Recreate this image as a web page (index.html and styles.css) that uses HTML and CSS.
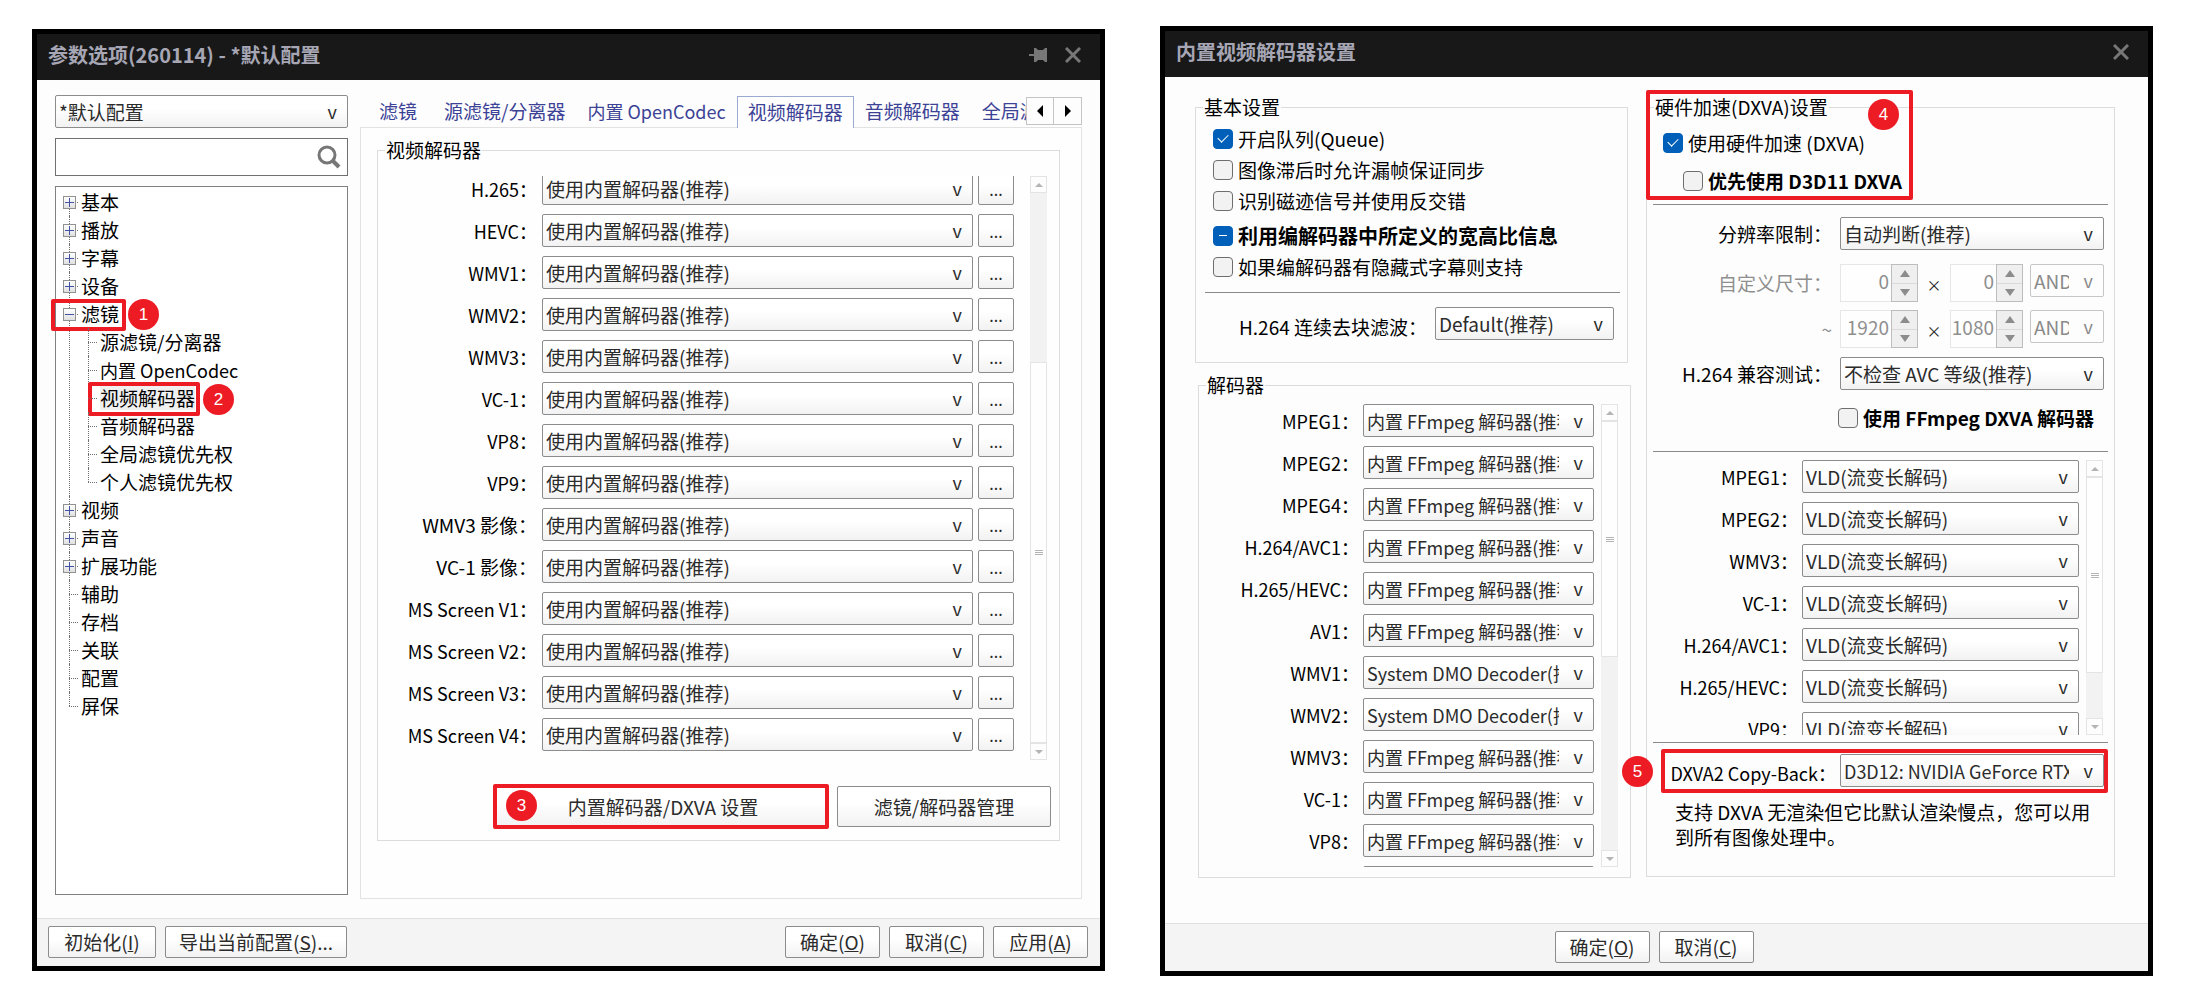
FILE: index.html
```html
<!DOCTYPE html>
<html lang="zh-CN">

<head>
  <meta charset="UTF-8">
  <meta name="viewport" content="width=device-width, initial-scale=1.0">
  <title>参数选项</title>
  <link rel="stylesheet" href="styles.css">
</head>

<body>
  <section class="window window-options">
    <header class="titlebar">
      <h1>参数选项(260114) - *默认配置</h1>
      <button class="icon-btn" aria-label="置顶">
        <svg width="18" height="16" viewBox="0 0 18 16"><path d="M0 7h5V1h2l2 2h5l2-2h2v14h-2l-2-2H9l-2 2H5V9H0z" fill="#777"/></svg>
      </button>
      <button class="icon-btn" aria-label="关闭">
        <svg width="16" height="16" viewBox="0 0 16 16"><path d="M1 1l14 14M15 1L1 15" stroke="#777" stroke-width="3" fill="none"/></svg>
      </button>
    </header>

    <main class="options-body">
      <aside class="sidebar">
        <div class="combo"><select aria-label="配置"><option>*默认配置</option></select></div>
        <div class="search">
          <input type="text" aria-label="搜索">
          <svg width="24" height="24" viewBox="0 0 24 24"><circle cx="10" cy="10" r="8" fill="none" stroke="#777" stroke-width="3"/><path d="M15 15l7 7" stroke="#777" stroke-width="4"/></svg>
        </div>
        <nav class="tree">
          <ul>
            <li><button class="toggle" aria-label="展开"></button><a href="#">基本</a></li>
            <li><button class="toggle" aria-label="展开"></button><a href="#">播放</a></li>
            <li><button class="toggle" aria-label="展开"></button><a href="#">字幕</a></li>
            <li><button class="toggle" aria-label="展开"></button><a href="#">设备</a></li>
            <li>
              <button class="toggle open" aria-label="折叠"></button><a href="#">滤镜</a>
              <span class="mark mark-filter"></span><span class="badge badge-filter">1</span>
              <ul>
                <li><a href="#">源滤镜/分离器</a></li>
                <li><a href="#" class="latin">内置 OpenCodec</a></li>
                <li><a href="#" class="current">视频解码器</a><span class="mark mark-video"></span><span class="badge badge-video">2</span></li>
                <li><a href="#">音频解码器</a></li>
                <li><a href="#">全局滤镜优先权</a></li>
                <li><a href="#">个人滤镜优先权</a></li>
              </ul>
            </li>
            <li><button class="toggle" aria-label="展开"></button><a href="#">视频</a></li>
            <li><button class="toggle" aria-label="展开"></button><a href="#">声音</a></li>
            <li><button class="toggle" aria-label="展开"></button><a href="#">扩展功能</a></li>
            <li><a href="#">辅助</a></li>
            <li><a href="#">存档</a></li>
            <li><a href="#">关联</a></li>
            <li><a href="#">配置</a></li>
            <li><a href="#">屏保</a></li>
          </ul>
        </nav>
      </aside>

      <div class="tab-area">
        <div class="tabs">
          <div class="tab-strip">
            <a href="#">滤镜</a>
            <a href="#">源滤镜/分离器</a>
            <a href="#" class="latin">内置 OpenCodec</a>
            <a href="#" class="active">视频解码器</a>
            <a href="#">音频解码器</a>
            <a href="#">全局滤镜优先权</a>
          </div>
          <div class="tab-arrows">
            <button aria-label="向左"><svg width="8" height="12" viewBox="0 0 8 12"><path d="M7 0v12L1 6z"/></svg></button>
            <button aria-label="向右"><svg width="8" height="12" viewBox="0 0 8 12"><path d="M1 0v12l6-6z"/></svg></button>
          </div>
        </div>

        <div class="tab-panel">
          <fieldset class="group codec-group">
            <legend>视频解码器</legend>
            <div class="scroller">
              <div class="rows codec-rows">
                <div class="row"><label for="c1">H.265：</label><div class="combo"><select id="c1"><option>使用内置解码器(推荐)</option></select></div><button class="btn more">...</button></div>
                <div class="row"><label for="c2">HEVC：</label><div class="combo"><select id="c2"><option>使用内置解码器(推荐)</option></select></div><button class="btn more">...</button></div>
                <div class="row"><label for="c3">WMV1：</label><div class="combo"><select id="c3"><option>使用内置解码器(推荐)</option></select></div><button class="btn more">...</button></div>
                <div class="row"><label for="c4">WMV2：</label><div class="combo"><select id="c4"><option>使用内置解码器(推荐)</option></select></div><button class="btn more">...</button></div>
                <div class="row"><label for="c5">WMV3：</label><div class="combo"><select id="c5"><option>使用内置解码器(推荐)</option></select></div><button class="btn more">...</button></div>
                <div class="row"><label for="c6">VC-1：</label><div class="combo"><select id="c6"><option>使用内置解码器(推荐)</option></select></div><button class="btn more">...</button></div>
                <div class="row"><label for="c7">VP8：</label><div class="combo"><select id="c7"><option>使用内置解码器(推荐)</option></select></div><button class="btn more">...</button></div>
                <div class="row"><label for="c8">VP9：</label><div class="combo"><select id="c8"><option>使用内置解码器(推荐)</option></select></div><button class="btn more">...</button></div>
                <div class="row"><label for="c9" class="mixed">WMV3 影像：</label><div class="combo"><select id="c9"><option>使用内置解码器(推荐)</option></select></div><button class="btn more">...</button></div>
                <div class="row"><label for="c10" class="mixed">VC-1 影像：</label><div class="combo"><select id="c10"><option>使用内置解码器(推荐)</option></select></div><button class="btn more">...</button></div>
                <div class="row"><label for="c11">MS Screen V1：</label><div class="combo"><select id="c11"><option>使用内置解码器(推荐)</option></select></div><button class="btn more">...</button></div>
                <div class="row"><label for="c12">MS Screen V2：</label><div class="combo"><select id="c12"><option>使用内置解码器(推荐)</option></select></div><button class="btn more">...</button></div>
                <div class="row"><label for="c13">MS Screen V3：</label><div class="combo"><select id="c13"><option>使用内置解码器(推荐)</option></select></div><button class="btn more">...</button></div>
                <div class="row"><label for="c14">MS Screen V4：</label><div class="combo"><select id="c14"><option>使用内置解码器(推荐)</option></select></div><button class="btn more">...</button></div>
              </div>
              <div class="scrollbar at-end"><i class="up"></i><b></b><i class="down"></i></div>
            </div>
            <div class="codec-actions">
              <div class="marked">
                <button class="btn btn-dxva">内置解码器/DXVA 设置</button>
                <span class="mark mark-dxva"></span><span class="badge badge-dxva">3</span>
              </div>
              <button class="btn btn-manage">滤镜/解码器管理</button>
            </div>
          </fieldset>
        </div>
      </div>
    </main>

    <footer class="buttons">
      <button class="btn btn-init">初始化(<u>I</u>)</button>
      <button class="btn btn-export">导出当前配置(<u>S</u>)...</button>
      <span class="spacer"></span>
      <button class="btn">确定(<u>O</u>)</button>
      <button class="btn">取消(<u>C</u>)</button>
      <button class="btn">应用(<u>A</u>)</button>
    </footer>
  </section>

  <section class="window window-codec">
    <header class="titlebar">
      <h1>内置视频解码器设置</h1>
      <button class="icon-btn" aria-label="关闭">
        <svg width="16" height="16" viewBox="0 0 16 16"><path d="M1 1l14 14M15 1L1 15" stroke="#777" stroke-width="3" fill="none"/></svg>
      </button>
    </header>

    <main class="codec-body">
      <div class="column">
        <fieldset class="group basic-group">
          <legend>基本设置</legend>
          <label class="check"><input type="checkbox" checked>开启队列(Queue)</label>
          <label class="check"><input type="checkbox">图像滞后时允许漏帧保证同步</label>
          <label class="check"><input type="checkbox">识别磁迹信号并使用反交错</label>
          <label class="check strong"><input type="checkbox" class="partial">利用编解码器中所定义的宽高比信息</label>
          <label class="check"><input type="checkbox">如果编解码器有隐藏式字幕则支持</label>
          <hr>
          <div class="row deblock"><label for="deblock">H.264 连续去块滤波：</label><div class="combo"><select id="deblock"><option>Default(推荐)</option></select></div></div>
        </fieldset>

        <fieldset class="group decoder-group">
          <legend>解码器</legend>
          <div class="scroller">
            <div class="rows">
              <div class="row"><label for="d1">MPEG1：</label><div class="combo"><select id="d1"><option>内置 FFmpeg 解码器(推荐)</option></select></div></div>
              <div class="row"><label for="d2">MPEG2：</label><div class="combo"><select id="d2"><option>内置 FFmpeg 解码器(推荐)</option></select></div></div>
              <div class="row"><label for="d3">MPEG4：</label><div class="combo"><select id="d3"><option>内置 FFmpeg 解码器(推荐)</option></select></div></div>
              <div class="row"><label for="d4">H.264/AVC1：</label><div class="combo"><select id="d4"><option>内置 FFmpeg 解码器(推荐)</option></select></div></div>
              <div class="row"><label for="d5">H.265/HEVC：</label><div class="combo"><select id="d5"><option>内置 FFmpeg 解码器(推荐)</option></select></div></div>
              <div class="row"><label for="d6">AV1：</label><div class="combo"><select id="d6"><option>内置 FFmpeg 解码器(推荐)</option></select></div></div>
              <div class="row"><label for="d7">WMV1：</label><div class="combo"><select id="d7"><option>System DMO Decoder(推荐)</option></select></div></div>
              <div class="row"><label for="d8">WMV2：</label><div class="combo"><select id="d8"><option>System DMO Decoder(推荐)</option></select></div></div>
              <div class="row"><label for="d9">WMV3：</label><div class="combo"><select id="d9"><option>内置 FFmpeg 解码器(推荐)</option></select></div></div>
              <div class="row"><label for="d10">VC-1：</label><div class="combo"><select id="d10"><option>内置 FFmpeg 解码器(推荐)</option></select></div></div>
              <div class="row"><label for="d11">VP8：</label><div class="combo"><select id="d11"><option>内置 FFmpeg 解码器(推荐)</option></select></div></div>
              <div class="row"><label for="d12">VP9：</label><div class="combo"><select id="d12"><option>内置 FFmpeg 解码器(推荐)</option></select></div></div>
            </div>
            <div class="scrollbar"><i class="up"></i><b></b><i class="down"></i></div>
          </div>
        </fieldset>
      </div>

      <div class="column">
        <fieldset class="group dxva-group">
          <legend>硬件加速(DXVA)设置</legend>
          <span class="mark mark-accel"></span><span class="badge badge-accel">4</span>
          <label class="check"><input type="checkbox" checked>使用硬件加速 (DXVA)</label>
          <label class="check strong check-d3d11"><input type="checkbox">优先使用 D3D11 DXVA</label>
          <hr>
          <div class="row limit"><label for="limit">分辨率限制：</label><div class="combo"><select id="limit"><option>自动判断(推荐)</option></select></div></div>
          <div class="row size">
            <label for="minw">自定义尺寸：</label>
            <div class="spinner"><input id="minw" type="text" value="0" disabled><span><i></i><i></i></span></div>
            <em>×</em>
            <div class="spinner"><input type="text" aria-label="最小高度" value="0" disabled><span><i></i><i></i></span></div>
            <div class="combo"><select aria-label="条件" disabled><option>AND</option></select></div>
          </div>
          <div class="row size">
            <label for="maxw" class="tilde">~</label>
            <div class="spinner"><input id="maxw" type="text" value="1920" disabled><span><i></i><i></i></span></div>
            <em>×</em>
            <div class="spinner"><input type="text" aria-label="最大高度" value="1080" disabled><span><i></i><i></i></span></div>
            <div class="combo"><select aria-label="条件" disabled><option>AND</option></select></div>
          </div>
          <div class="row limit compat"><label for="compat">H.264 兼容测试：</label><div class="combo"><select id="compat"><option>不检查 AVC 等级(推荐)</option></select></div></div>
          <label class="check strong check-ffmpeg"><input type="checkbox">使用 FFmpeg DXVA 解码器</label>
          <hr>
          <div class="scroller">
            <div class="rows">
              <div class="row"><label for="x1">MPEG1：</label><div class="combo"><select id="x1"><option>VLD(流变长解码)</option></select></div></div>
              <div class="row"><label for="x2">MPEG2：</label><div class="combo"><select id="x2"><option>VLD(流变长解码)</option></select></div></div>
              <div class="row"><label for="x3">WMV3：</label><div class="combo"><select id="x3"><option>VLD(流变长解码)</option></select></div></div>
              <div class="row"><label for="x4">VC-1：</label><div class="combo"><select id="x4"><option>VLD(流变长解码)</option></select></div></div>
              <div class="row"><label for="x5">H.264/AVC1：</label><div class="combo"><select id="x5"><option>VLD(流变长解码)</option></select></div></div>
              <div class="row"><label for="x6">H.265/HEVC：</label><div class="combo"><select id="x6"><option>VLD(流变长解码)</option></select></div></div>
              <div class="row"><label for="x7">VP9：</label><div class="combo"><select id="x7"><option>VLD(流变长解码)</option></select></div></div>
            </div>
            <div class="scrollbar"><i class="up"></i><b></b><i class="down"></i></div>
          </div>
          <hr>
          <div class="row limit copyback">
            <label for="copyback">DXVA2 Copy-Back：</label>
            <div class="combo"><select id="copyback"><option>D3D12: NVIDIA GeForce RTX 4060</option></select></div>
            <span class="mark mark-copy"></span><span class="badge badge-copy">5</span>
          </div>
          <p>支持 DXVA 无渲染但它比默认渲染慢点，您可以用到所有图像处理中。</p>
        </fieldset>
      </div>
    </main>

    <footer class="buttons centered">
      <button class="btn">确定(<u>O</u>)</button>
      <button class="btn">取消(<u>C</u>)</button>
    </footer>
  </section>

  <script>
    document.querySelector('.partial').indeterminate = true;
  </script>
</body>

</html>
```
FILE: styles.css
```css
* {
  box-sizing: border-box;
}

body {
  margin: 0;
  padding: 26px 33px 30px 32px;
  display: grid;
  grid-template-columns: 1073fr 993fr;
  gap: 55px;
  align-items: start;
  background: #fff;
  color: #000;
  font-family: "Noto Sans CJK SC", "Open Sans", sans-serif;
  font-size: 19px;
  line-height: 24px;
}

button,
input,
select {
  font: inherit;
  color: inherit;
  margin: 0;
}

a {
  color: inherit;
  text-decoration: none;
}

.latin {
  font-size: 18px;
}

.window {
  border: 5px solid #000;
  background: #fdfdfd;
  min-width: 0;
}

.window-options {
  margin-top: 3px;
}

.titlebar {
  display: flex;
  align-items: center;
  gap: 18px;
  height: 46px;
  padding: 0 19px 4px 11px;
  background: #181818;
}

.titlebar h1 {
  flex: 1;
  margin: 0;
  font-size: 20px;
  font-weight: 700;
  color: #a6a6b4;
}

.icon-btn {
  display: flex;
  padding: 0;
  border: 0;
  background: none;
}

/* buttons and drop-downs */

.btn,
.combo {
  border: 1px solid #8c8c8c;
  border-radius: 2px;
  background: linear-gradient(#fff 40%, #f2f2f2);
  color: #2b2b2b;
}

.btn {
  height: 32px;
  padding: 0;
  line-height: 24px;
}

.combo {
  position: relative;
  height: 33px;
  min-width: 0;
}

.combo::after {
  content: "v";
  position: absolute;
  right: 10px;
  top: 3px;
  font-size: 18px;
  pointer-events: none;
}

.combo select {
  appearance: none;
  display: block;
  width: 100%;
  height: 31px;
  padding: 0;
  border: 0;
  border-left: 3px solid transparent;
  border-right: 34px solid transparent;
  background: none;
  opacity: 1;
}

.group {
  position: relative;
  min-width: 0;
  margin: 0;
  border: 1px solid #dcdcdc;
}

.group legend {
  margin-left: 7px;
  padding: 0 1px;
}

.row {
  display: grid;
  align-items: center;
}

.row label {
  padding-right: 4px;
  text-align: right;
  white-space: nowrap;
}

.scroller {
  display: flex;
  overflow: hidden;
}

.rows {
  flex: 1;
  display: flex;
  flex-direction: column;
  gap: 9px;
  min-width: 0;
}

.rows label {
  font-size: 18px;
}

.rows .mixed {
  font-size: 19px;
}

.scrollbar {
  display: flex;
  flex-direction: column;
  width: 17px;
  background: #f2f2f2;
}

.scrollbar i {
  display: flex;
  align-items: center;
  justify-content: center;
  height: 17px;
  border: 1px solid #e4e4e4;
  background: #fdfdfd;
}

.scrollbar i::after {
  content: "";
  border: 4px solid transparent;
}

.scrollbar .up::after {
  border-top: 0;
  border-bottom-color: #b4b4b4;
}

.scrollbar .down {
  margin-top: auto;
}

.scrollbar .down::after {
  border-bottom: 0;
  border-top-color: #b4b4b4;
}

.scrollbar b {
  display: flex;
  align-items: center;
  justify-content: center;
  border: 1px solid #e4e4e4;
  background: #fefefe;
}

.scrollbar b::after {
  content: "";
  width: 8px;
  height: 5px;
  background: repeating-linear-gradient(#b4b4b4 0 1px, transparent 1px 2px);
}

.scrollbar.at-end b {
  margin-top: auto;
  height: 381px;
}

.scrollbar.at-end .down {
  margin-top: 0;
}

/* numbered call-outs */

.mark {
  position: absolute;
  border: 4px solid #ed1c24;
  border-radius: 2px;
  pointer-events: none;
}

.badge {
  position: absolute;
  width: 31px;
  height: 31px;
  border-radius: 50%;
  background: #ed1c24;
  color: #fff;
  font: 17px/31px "Liberation Sans", sans-serif;
  text-align: center;
}

/* options window */

.options-body {
  display: flex;
  gap: 12px;
  padding: 15px 18px 19px;
}

.sidebar {
  display: flex;
  flex-direction: column;
  gap: 10px;
  flex: 0 0 293px;
  padding-bottom: 4px;
}

.search {
  display: flex;
  align-items: center;
  height: 38px;
  padding-right: 6px;
  border: 1px solid #707070;
  background: #fff;
}

.search input {
  flex: 1;
  min-width: 0;
  border: 0;
  outline: 0;
  background: none;
}

.tree {
  flex: 1;
  padding: 1px 0 0 7px;
  border: 1px solid #808080;
  background: #fff;
}

.tree ul {
  margin: 0;
  padding: 0;
  list-style: none;
}

.tree ul ul {
  padding-left: 19px;
}

.tree li {
  position: relative;
  padding-left: 18px;
  line-height: 28px;
}

.tree li:has(ul) {
  padding-left: 0;
}

.tree li:has(ul) > a {
  margin-left: 18px;
}

.tree a {
  display: block;
  width: fit-content;
}

.tree .current {
  background: #f0f0f0;
  line-height: 24px;
  padding: 2px 0;
  background-clip: content-box;
}

.tree li::before {
  content: "";
  position: absolute;
  left: 6px;
  top: 0;
  bottom: 0;
  border-left: 1px dotted #707070;
}

.tree li:first-child::before {
  top: 14px;
}

.tree ul ul li:first-child::before {
  top: 0;
}

.tree li:last-child::before {
  bottom: auto;
  height: 14px;
}

.tree li::after {
  content: "";
  position: absolute;
  left: 6px;
  top: 14px;
  width: 9px;
  border-top: 1px dotted #707070;
}

.toggle {
  position: absolute;
  z-index: 1;
  left: 0;
  top: 8px;
  width: 13px;
  height: 13px;
  padding: 0;
  border: 1px solid #919191;
  background:
    linear-gradient(#4053a8, #4053a8) center / 9px 1px no-repeat,
    linear-gradient(#4053a8, #4053a8) center / 1px 9px no-repeat,
    linear-gradient(#fff, #e0e0e0);
}

.toggle.open {
  background:
    linear-gradient(#4053a8, #4053a8) center / 9px 1px no-repeat,
    linear-gradient(#fff, #e0e0e0);
}

.mark-filter {
  left: -12px;
  top: -1px;
  width: 75px;
  height: 32px;
}

.badge-filter {
  left: 65px;
  top: -1px;
}

.mark-video {
  left: 6px;
  top: -2px;
  width: 112px;
  height: 34px;
}

.badge-video {
  left: 121px;
  top: 0;
}

.tab-area {
  flex: 1;
  min-width: 0;
  display: flex;
  flex-direction: column;
}

.tabs {
  display: flex;
  align-items: flex-start;
  height: 32px;
  color: #3c4396;
}

.tab-strip {
  flex: 1;
  display: flex;
  min-width: 0;
  height: 33px;
  padding: 1px 0 0 8px;
  overflow: hidden;
  white-space: nowrap;
}

.tab-strip a {
  flex: none;
  padding: 3px 11px;
}

.tab-strip a:first-child {
  margin-right: 5px;
}

.tab-strip .active {
  position: relative;
  z-index: 1;
  padding: 3px 10px;
  border: 1px solid #9aaad0;
  border-bottom: 0;
  background: #fefefe;
}

.tab-arrows {
  display: flex;
  margin-top: 2px;
}

.tab-arrows button {
  display: flex;
  align-items: center;
  justify-content: center;
  width: 28px;
  height: 28px;
  padding: 0;
  border: 1px solid #c4c4c4;
  background: #fdfdfd;
}

.tab-arrows button + button {
  border-left: 0;
}

.tab-panel {
  padding: 10px 21px 57px 16px;
  border: 1px solid #e2e2e2;
  background: #fefefe;
}

.codec-group {
  padding: 14px 12px 13px 0;
}

.codec-rows {
  margin: -4px 16px 0 0;
}

.codec-group .scroller {
  height: 584px;
}

.codec-rows .row {
  grid-template-columns: 159px 1fr 36px;
  column-gap: 5px;
}

.codec-rows label {
  padding-right: 0;
}

.codec-rows .more {
  height: 33px;
  font-size: 16px;
}

.codec-actions {
  display: flex;
  justify-content: flex-end;
  gap: 10px;
  margin: 26px -4px 0 0;
}

.codec-actions .btn {
  height: 41px;
}

.marked {
  position: relative;
}

.btn-dxva {
  width: 332px;
  padding-left: 4px;
}

.btn-manage {
  width: 214px;
}

.mark-dxva {
  inset: -2px;
}

.badge-dxva {
  left: 11px;
  top: 4px;
}

.buttons {
  display: flex;
  gap: 9px;
  padding: 7px 12px 8px 11px;
  border-top: 1px solid #dfdfdf;
  background: #f4f4f4;
}

.buttons .btn {
  width: 95px;
}

.buttons .btn-init {
  width: 108px;
}

.buttons .btn-export {
  width: 182px;
}

.spacer {
  flex: 1;
}

.centered {
  justify-content: center;
  padding-right: 16px;
}

/* decoder window */

.codec-body {
  display: grid;
  grid-template-columns: 436fr 469fr;
  gap: 15px;
  padding: 18px 33px 45px 30px;
}

.column {
  display: flex;
  flex-direction: column;
  gap: 10px;
  min-width: 0;
}

.codec-body hr {
  height: 1px;
  margin: 10px 7px 14px 9px;
  border: 0;
  background: #8a8a8a;
}

.check {
  display: flex;
  align-items: center;
  gap: 5px;
  height: 31px;
  white-space: nowrap;
}

.check input {
  appearance: none;
  flex: none;
  width: 20px;
  height: 20px;
  border: 1px solid #6e6e6e;
  border-radius: 4px;
  background: #f2f2f2;
}

.check input:checked,
.check input:indeterminate {
  display: flex;
  align-items: center;
  justify-content: center;
  border-color: #005fb8;
  background: #005fb8;
}

.check input:checked::after {
  content: "";
  width: 5px;
  height: 9px;
  margin-bottom: 3px;
  border: solid #fff;
  border-width: 0 1px 1px 0;
  transform: rotate(45deg);
}

.check input:indeterminate::after {
  content: "";
  width: 8px;
  height: 1px;
  background: #fff;
}

.strong {
  font-weight: 700;
}

.basic-group {
  margin-right: 3px;
  padding: 4px 0 22px;
}

.basic-group .check {
  margin-left: 17px;
}

.basic-group .strong {
  margin-top: 4px;
  font-size: 20px;
}

.deblock {
  grid-template-columns: 1fr 179px;
  column-gap: 4px;
  margin-right: 13px;
}

.deblock label {
  padding-top: 6px;
}

.decoder-group {
  margin-left: 3px;
  padding: 7px 12px 10px 0;
}

.decoder-group .scroller {
  gap: 7px;
  height: 463px;
}

.decoder-group .row {
  grid-template-columns: 164px 1fr;
}

.decoder-group select {
  font-size: 18px;
}

.decoder-group .scrollbar b {
  height: 236px;
}

.dxva-group {
  padding: 8px 0 27px;
}

.dxva-group .check {
  margin-left: 16px;
}

.dxva-group .check-d3d11 {
  margin: 7px 0 0 36px;
}

.dxva-group .check-ffmpeg {
  margin: 12px 0 0 191px;
}

.dxva-group hr {
  margin: 8px 6px 12px;
}

.limit {
  position: relative;
  grid-template-columns: 1fr 264px;
  column-gap: 4px;
  margin-right: 10px;
}

.size {
  grid-template-columns: 1fr 78px 32px 73px 81px;
  align-items: start;
  margin: 8px 10px 0 0;
  color: #8f8f8f;
}

.limit + .size {
  margin-top: 14px;
}

.size label {
  padding: 7px 8px 0 0;
}

.size em {
  padding-top: 9px;
  font-size: 15px;
  font-style: normal;
  color: #222;
  text-align: center;
}

.size .combo {
  margin-left: 7px;
  border-color: #c6c6c6;
  background: #fdfdfd;
  color: #8a8a8a;
}

.compat {
  margin-top: 9px;
}

.spinner {
  display: flex;
  height: 38px;
  border: 1px solid #e6e6e6;
  background: #fefefe;
}

.spinner input {
  flex: 1;
  min-width: 0;
  width: 0;
  height: 31px;
  padding: 0 3px 0 0;
  border: 0;
  background: none;
  text-align: right;
}

.spinner span {
  display: flex;
  flex-direction: column;
  width: 27px;
  margin: -1px;
  border: 1px solid #bdbdbd;
  background: #efefef;
}

.spinner i {
  flex: 1;
  display: flex;
  align-items: center;
  justify-content: center;
}

.spinner i + i {
  border-top: 1px solid #dadada;
}

.spinner i::after {
  content: "";
  border: 5px solid transparent;
  border-top: 0;
  border-bottom: 7px solid #8c8c8c;
}

.spinner i + i::after {
  border-top: 7px solid #8c8c8c;
  border-bottom: 0;
}

.check-ffmpeg + hr {
  margin: 18px 6px 8px;
}

.dxva-group .scroller {
  gap: 7px;
  height: 275px;
  margin-right: 11px;
}

.dxva-group .scroller .row {
  grid-template-columns: 155px 1fr;
}

.dxva-group .scrollbar b {
  height: 196px;
}

.dxva-group .scroller + hr {
  margin: 7px 6px 11px;
}

.copyback label {
  padding: 4px 0 0;
  font-size: 18px;
}

.copyback select {
  font-size: 18px;
}

.dxva-group p {
  margin: 12px 22px 0 28px;
  line-height: 25px;
}

.mark-accel {
  left: -1px;
  top: -29px;
  width: 267px;
  height: 110px;
}

.badge-accel {
  left: 221px;
  top: -20px;
}

.mark-copy {
  inset: -5px -4px -6px 14px;
}

.badge-copy {
  left: -25px;
  top: 2px;
}
```
